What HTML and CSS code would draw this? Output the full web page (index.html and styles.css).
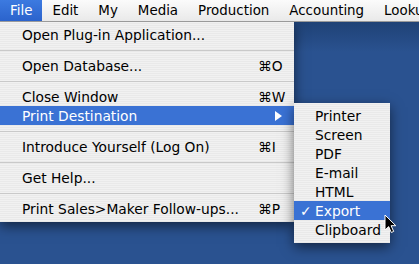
FILE: index.html
```html
<!DOCTYPE html>
<html lang="en">
<head>
  <meta charset="UTF-8" />
  <title>File menu</title>
  <link rel="stylesheet" href="styles.css">
</head>
<body>

  <!-- menu bar -->
  <div class="menubar">
    <span class="bar-item active">File</span>
    <span class="bar-item">Edit</span>
    <span class="bar-item">My</span>
    <span class="bar-item">Media</span>
    <span class="bar-item">Production</span>
    <span class="bar-item">Accounting</span>
    <span class="bar-item">Lookup</span>
  </div>

  <div class="desktop">
    <!-- File menu -->
    <div class="menu file-menu">
      <div class="item"><span class="label">Open Plug-in Application...</span></div>
      <div class="sep"></div>
      <div class="item"><span class="label">Open Database...</span><span class="key">⌘O</span></div>
      <div class="sep"></div>
      <div class="item"><span class="label">Close Window</span><span class="key">⌘W</span></div>
      <div class="item selected has-sub">
        <span class="label">Print Destination</span><span class="arrow"></span>

        <!-- submenu -->
        <div class="menu sub-menu">
          <div class="item"><span class="label">Printer</span></div>
          <div class="item"><span class="label">Screen</span></div>
          <div class="item"><span class="label">PDF</span></div>
          <div class="item"><span class="label">E-mail</span></div>
          <div class="item"><span class="label">HTML</span></div>
          <div class="item selected"><span class="check">✓</span><span class="label">Export</span></div>
          <div class="item"><span class="label">Clipboard</span></div>
        </div>
      </div>
      <div class="sep"></div>
      <div class="item"><span class="label">Introduce Yourself (Log On)</span><span class="key">⌘I</span></div>
      <div class="sep"></div>
      <div class="item"><span class="label">Get Help...</span></div>
      <div class="sep"></div>
      <div class="item"><span class="label">Print Sales&gt;Maker Follow-ups...</span><span class="key">⌘P</span></div>
    </div>

    <!-- mouse pointer -->
    <svg class="cursor" width="13" height="20" viewBox="0 0 13 20">
      <path d="M1 1 L1 16 L4.7 12.6 L7.3 18.5 L9.7 17.4 L7.1 11.7 L11.8 11.7 Z" fill="#000" stroke="#fff" stroke-width="1" stroke-linejoin="round"/>
    </svg>
  </div>

</body>
</html>
```

FILE: styles.css
```css
body {
  margin: 0;
  width: 419px;
  height: 264px;
  overflow: hidden;
  font-family: 'DejaVu Sans', sans-serif;
  font-size: 13.8px;
  background: #2a5290;
}
.menubar {
  display: flex;
  height: 21px;
  line-height: 21px;
  background: linear-gradient(#fbfbfb, #e9e9e9);
  border-bottom: 1px solid #9a9a9a;
  white-space: nowrap;
  overflow: hidden;
  color: #000;
  position: relative;
  z-index: 2;
  font-size: 13.4px;
}
.bar-item {
  padding: 0 10px;
}
.bar-item.active {
  background: linear-gradient(#3c7ae0, #2b63cc);
  color: #fff;
}
.desktop {
  position: relative;
  height: 242px;
  background: linear-gradient(#1f4276, #2a5290 30px);
}
.menu {
  position: absolute;
  background: repeating-linear-gradient(#f1f1f1 0 1px, #e9e9e9 1px 2px);
  padding: 3px 0 4px;
  box-shadow: 0 4px 12px rgba(0, 0, 0, 0.55);
}
.file-menu {
  left: 0;
  top: 0;
  width: 294px;
}
.item {
  display: flex;
  align-items: center;
  height: 19px;
  padding-left: 22px;
  color: #000;
  white-space: nowrap;
}
.item .label {
  flex: 1;
}
.item .key {
  width: 36px;
}
.item.selected {
  background: #3a72d4;
  color: #fff;
}
.has-sub {
  position: relative;
}
.arrow {
  width: 0;
  height: 0;
  border-left: 7px solid #fff;
  border-top: 5px solid transparent;
  border-bottom: 5px solid transparent;
  margin-right: 12px;
}
.sep {
  height: 12px;
  display: flex;
  align-items: center;
}
.sep::before {
  content: "";
  flex: 1;
  height: 1px;
  background: #c9c9c9;
}
.sub-menu {
  left: 294px;
  top: -3px;
  width: 96px;
  z-index: 3;
}
.sub-menu .item {
  padding-left: 21px;
  position: relative;
}
.check {
  position: absolute;
  left: 6px;
  font-weight: bold;
}
.cursor {
  position: absolute;
  left: 384px;
  top: 192px;
  z-index: 5;
}
```
